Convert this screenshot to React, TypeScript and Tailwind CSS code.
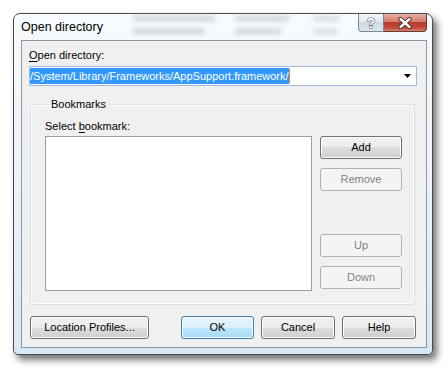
import React from "react";

type BtnProps = {
  label: string;
  w: string;
  disabled?: boolean;
  primary?: boolean;
};

function Btn({ label, w, disabled, primary }: BtnProps) {
  const look = disabled
    ? "border-[#adb2b5] bg-[#f4f4f4] text-[#838383]"
    : primary
      ? "border-[#3c7fb1] bg-[linear-gradient(#eaf6fd,#d9f0fc_50%,#bee6fd_50%,#a7d9f5)] text-black shadow-[inset_0_0_0_1px_#f4fbff]"
      : "border-[#707070] bg-[linear-gradient(#f2f2f2,#ebebeb_50%,#dddddd_50%,#cfcfcf)] text-black shadow-[inset_0_0_0_1px_#fcfcfc]";
  return (
    <div
      className={`${w} h-[23px] shrink-0 rounded-[3px] border flex items-center justify-center leading-[15px] ${look}`}
    >
      {label}
    </div>
  );
}

export default function App() {
  return (
    <div className="w-[448px] h-[371px] bg-white font-['Liberation_Sans',Arial,sans-serif] text-[11px] text-black pt-[13px] pl-[13px]">
      {/* window frame */}
      <div className="w-[420px] h-[342px] flex flex-col rounded-t-[7px] rounded-b-[5px] border border-[#454b53] bg-[linear-gradient(180deg,#f8fbfd,#e8f0f8_60%,#d9e8f5)] pl-[7px] pr-[5px] pb-[6px] shadow-[4px_5px_7px_rgba(0,0,0,0.55)]">
        {/* title bar */}
        <div className="relative h-[26px] flex items-start shrink-0">
          {/* blurred content behind the glass */}
          <div className="absolute left-[112px] top-[2px] w-[82px] h-[5px] bg-[#9aa8b8] blur-[2.5px] opacity-50" />
          <div className="absolute left-[112px] top-[15px] w-[72px] h-[5px] bg-[#9aa8b8] blur-[2.5px] opacity-50" />
          <div className="absolute left-[214px] top-[2px] w-[54px] h-[5px] bg-[#9aa8b8] blur-[2.5px] opacity-50" />
          <div className="absolute left-[214px] top-[15px] w-[46px] h-[5px] bg-[#9aa8b8] blur-[2.5px] opacity-50" />
          <div className="absolute left-[292px] top-[2px] w-[26px] h-[5px] bg-[#9aa8b8] blur-[2.5px] opacity-40" />
          <div className="absolute left-[292px] top-[15px] w-[24px] h-[5px] bg-[#9aa8b8] blur-[2.5px] opacity-40" />
          <span className="relative self-center text-[12.5px] leading-[26px] text-black">Open directory</span>
          <div className="relative ml-auto flex">
            <div className="w-[26px] h-[18px] rounded-bl-[4px] border border-t-0 border-[#7a8796] bg-[linear-gradient(#f4f7fa,#e2e9f0_50%,#cdd8e3_50%,#dfe7ee)] flex items-center justify-center">
              <svg width="12" height="14" viewBox="0 0 12 14">
                <text
                  x="6"
                  y="12"
                  textAnchor="middle"
                  fontSize="14"
                  fontWeight="bold"
                  fontFamily="Liberation Sans, sans-serif"
                  fill="#ffffff"
                  stroke="#4b5561"
                  strokeWidth="1"
                  paintOrder="stroke"
                >
                  ?
                </text>
              </svg>
            </div>
            <div className="w-[43px] h-[18px] rounded-br-[4px] border border-t-0 border-l-0 border-[#6b3a38] bg-[linear-gradient(#e9b1a6,#d47a6b_45%,#b93b2c_50%,#c2483a_80%,#d9806f)] flex items-center justify-center">
              <svg width="14" height="12" viewBox="0 0 14 12">
                <path d="M2.5 2 L11.5 10 M11.5 2 L2.5 10" stroke="#3a2422" strokeWidth="4.2" strokeLinecap="round" />
                <path d="M2.5 2 L11.5 10 M11.5 2 L2.5 10" stroke="#ffffff" strokeWidth="2.4" strokeLinecap="round" />
              </svg>
            </div>
          </div>
        </div>

        {/* client area */}
        <div className="flex-1 flex flex-col border border-[#8c97a3] bg-[#f0f0f0]">
          <div className="ml-[7px] mt-[7px] leading-[15px]">
            <span className="underline underline-offset-2">O</span>pen directory:
          </div>
          <div className="ml-[7px] mt-[3px] w-[388px] h-[20px] border border-[#9dbcdf] bg-white flex items-center pr-[5px]">
            <span className="bg-[#3399ff] text-white leading-[16px]">/System/Library/Frameworks/AppSupport.framework/</span>
            <span className="w-px h-[14px] bg-[#e07b1f]" />
            <svg className="ml-auto" width="7" height="4" viewBox="0 0 7 4">
              <path d="M0 0 H7 L3.5 4 Z" fill="#000000" />
            </svg>
          </div>

          <fieldset className="ml-[8px] mt-[11px] w-[385px] rounded-[3px] border border-[#d5dfe5] shadow-[inset_0_0_0_1px_#ffffff] pl-[14px] pb-[13px]">
            <legend className="ml-[4px] px-[2px] leading-[15px]">Bookmarks</legend>
            <div className="flex gap-[8px]">
              <div className="flex flex-col">
                <div className="mt-[7px] leading-[15px]">
                  Select <span className="underline underline-offset-2">b</span>ookmark:
                </div>
                <div className="mt-[2px] w-[267px] h-[155px] border border-[#9a9ea5] bg-white" />
              </div>
              <div className="mt-[24px] flex flex-col">
                <Btn label="Add" w="w-[82px]" />
                <div className="mt-[9px]">
                  <Btn label="Remove" w="w-[82px]" disabled />
                </div>
                <div className="mt-[43px]">
                  <Btn label="Up" w="w-[82px]" disabled />
                </div>
                <div className="mt-[9px]">
                  <Btn label="Down" w="w-[82px]" disabled />
                </div>
              </div>
            </div>
          </fieldset>

          <div className="ml-[8px] mt-[11px] flex">
            <Btn label="Location Profiles..." w="w-[119px]" />
            <div className="ml-[32px] flex gap-[7px]">
              <Btn label="OK" w="w-[73px]" primary />
              <Btn label="Cancel" w="w-[74px]" />
              <Btn label="Help" w="w-[74px]" />
            </div>
          </div>
        </div>
      </div>
    </div>
  );
}
